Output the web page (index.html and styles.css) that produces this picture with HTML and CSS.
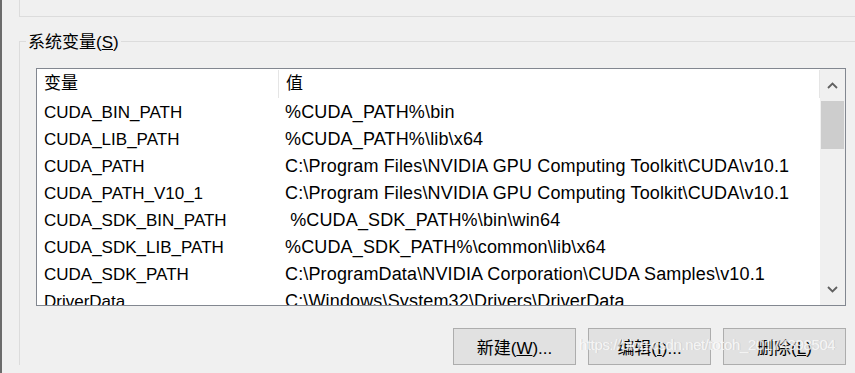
FILE: index.html
```html
<!DOCTYPE html>
<html lang="zh-CN">
  <head>
    <meta charset="UTF-8" />
    <meta name="viewport" content="width=device-width, initial-scale=1.0" />
    <title>环境变量</title>
    <link rel="stylesheet" href="styles.css">
  </head>
  <body>
    <div class="window">
      <div class="prev-group"></div>

      <fieldset class="group">
        <legend>系统变量(<u>S</u>)</legend>

        <div class="list-box">
          <div class="list-body">
            <div class="list-head">
              <div class="col-name">变量</div>
              <div class="col-value">值</div>
            </div>
            <div class="row"><div class="col-name">CUDA_BIN_PATH</div><div class="col-value">%CUDA_PATH%\bin</div></div>
            <div class="row"><div class="col-name">CUDA_LIB_PATH</div><div class="col-value">%CUDA_PATH%\lib\x64</div></div>
            <div class="row"><div class="col-name">CUDA_PATH</div><div class="col-value">C:\Program Files\NVIDIA GPU Computing Toolkit\CUDA\v10.1</div></div>
            <div class="row"><div class="col-name">CUDA_PATH_V10_1</div><div class="col-value">C:\Program Files\NVIDIA GPU Computing Toolkit\CUDA\v10.1</div></div>
            <div class="row"><div class="col-name">CUDA_SDK_BIN_PATH</div><div class="col-value">&nbsp;%CUDA_SDK_PATH%\bin\win64</div></div>
            <div class="row"><div class="col-name">CUDA_SDK_LIB_PATH</div><div class="col-value">%CUDA_SDK_PATH%\common\lib\x64</div></div>
            <div class="row"><div class="col-name">CUDA_SDK_PATH</div><div class="col-value">C:\ProgramData\NVIDIA Corporation\CUDA Samples\v10.1</div></div>
            <div class="row"><div class="col-name">DriverData</div><div class="col-value">C:\Windows\System32\Drivers\DriverData</div></div>
          </div>

          <div class="scrollbar">
            <div class="arrow">
              <svg width="11" height="7" viewBox="0 0 11 7"><path d="M1 6 L5.5 1.5 L10 6" fill="none" stroke="#606060" stroke-width="1.8"/></svg>
            </div>
            <div class="track">
              <div class="thumb"></div>
            </div>
            <div class="arrow">
              <svg width="11" height="7" viewBox="0 0 11 7"><path d="M1 1 L5.5 5.5 L10 1" fill="none" stroke="#606060" stroke-width="1.8"/></svg>
            </div>
          </div>
        </div>

        <div class="buttons">
          <button>新建(<u>W</u>)...</button>
          <button>编辑(<u>I</u>)...</button>
          <button>删除(<u>L</u>)</button>
        </div>
      </fieldset>

      <div class="watermark">https://blog.csdn.net/totoh_20174398504</div>
    </div>
  </body>
</html>
```

FILE: styles.css
```css
body {
  margin: 0;
  background-color: #f0f0f0;
  font-family: "Liberation Sans", "Noto Sans CJK SC", sans-serif;
  font-size: 17px;
  color: #000;
}

.window {
  position: relative;
  height: 373px;
  box-sizing: border-box;
  border-left: 2px solid #6b6b6b;
  padding-left: 17px;
  overflow: hidden;
}

/* bottom edge of the group above */
.prev-group {
  height: 16px;
  border-left: 1px solid #dcdcdc;
  border-bottom: 1px solid #dcdcdc;
}

.group {
  margin: 12px 0 0 0;
  padding: 0 9px 0 16px;
  border: 1px solid #dcdcdc;
  border-right: none;
  border-bottom: none;
  min-width: 0;
}

.group legend {
  margin-left: -10px;
  padding: 4px 2px 0 2px;
  line-height: 20px;
}

.list-box {
  display: flex;
  margin-top: 15px;
  height: 238px;
  box-sizing: border-box;
  border: 1px solid #828790;
  background-color: #fff;
}

.list-body {
  flex: 1;
  overflow: hidden;
  white-space: nowrap;
}

.list-head,
.row {
  display: flex;
}

.list-head {
  height: 30px;
  line-height: 30px;
}

.list-head .col-name,
.list-head .col-value {
  border-right: 1px solid #e5e5e5;
  margin: 1px 0;
  line-height: 28px;
}

.row {
  height: 27px;
  line-height: 27px;
}

.col-name {
  width: 234px;
  padding-left: 7px;
  flex-shrink: 0;
}

.col-value {
  flex: 1;
  padding-left: 7px;
}

.row .col-value {
  font-size: 18px;
  letter-spacing: 0.15px;
}

.scrollbar {
  width: 25px;
  display: flex;
  flex-direction: column;
  background-color: #f0f0f0;
}

.arrow {
  height: 32px;
  display: flex;
  align-items: center;
  justify-content: center;
}

.track {
  flex: 1;
  padding: 0 1px;
}

.thumb {
  height: 48px;
  background-color: #cdcdcd;
}

.buttons {
  display: flex;
  justify-content: flex-end;
  gap: 12px;
  margin-top: 22px;
}

.buttons button {
  width: 123px;
  height: 37px;
  border: 1px solid #adadad;
  background-color: #e1e1e1;
  font-family: "Liberation Sans", "Noto Sans CJK SC", sans-serif;
  font-size: 17px;
  color: #000;
  padding: 0;
}

.watermark {
  position: absolute;
  left: 577px;
  top: 336px;
  font-size: 15px;
  letter-spacing: -0.4px;
  color: rgba(255, 255, 255, 0.75);
  text-shadow: 1px 0 rgba(200, 200, 200, 0.6);
  white-space: nowrap;
  pointer-events: none;
}
```
